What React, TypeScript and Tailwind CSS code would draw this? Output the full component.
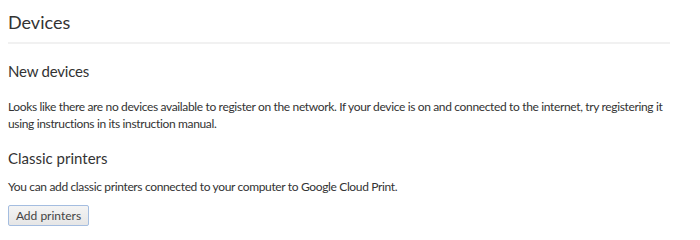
export default function App() {
  return (
    <div className="w-[700px] h-[240px] bg-white pl-2 pr-[30px] text-[#333] font-['Segoe_UI','Lato',sans-serif]">
      <div className="pt-[11px] pb-[9px] border-b-2 border-[#f1f1f1]">
        <h1 className="text-[18px] leading-[22px] font-normal">Devices</h1>
      </div>

      <section className="pt-[17px]">
        <h2 className="text-[15px] leading-[20px] font-normal tracking-[-0.2px]">New devices</h2>
        <p className="mt-[17px] text-[12px] leading-[17px] tracking-[-0.35px]">
          Looks like there are no devices available to register on the network. If your device is on and connected to the internet, try registering it using instructions in its instruction manual.
        </p>
      </section>

      <section className="pt-[16px]">
        <h2 className="text-[15px] leading-[20px] font-normal">Classic printers</h2>
        <p className="mt-[10px] text-[12px] leading-[17px] tracking-[-0.35px]">
          You can add classic printers connected to your computer to Google Cloud Print.
        </p>
        <button className="mt-[10px] h-[21px] w-[81px] rounded-[2px] border border-[#a4bde0] bg-gradient-to-b from-[#f4f4f4] to-[#e6e6e6] text-[12px] leading-[19px] text-[#444]">
          Add printers
        </button>
      </section>
    </div>
  )
}
